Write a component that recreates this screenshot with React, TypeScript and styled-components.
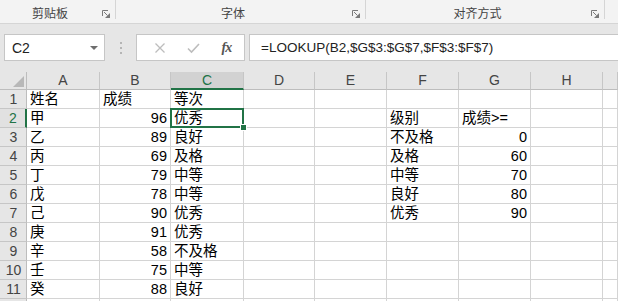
import React from "react";
import styled, { createGlobalStyle } from "styled-components";

const Global = createGlobalStyle`
  html, body { margin: 0; padding: 0; background: #ffffff; overflow: hidden; }
  body { font-family: "Liberation Sans", "Noto Sans CJK SC", sans-serif; }
`;

const Page = styled.div`
  width: 618px;
  height: 301px;
  overflow: hidden;
  display: flex;
  flex-direction: column;
  background: #ffffff;
`;

const Ribbon = styled.div`
  height: 23px;
  background: #f3f3f3;
  border-bottom: 1px solid #d5d5d5;
  display: flex;
  flex-shrink: 0;
`;

const Group = styled.div<{ $w: number }>`
  width: ${(p) => p.$w}px;
  height: 19px;
  display: flex;
  align-items: flex-end;
  border-right: 1px solid #d5d5d5;
  box-sizing: border-box;
  flex-shrink: 0;
`;

const GroupLabel = styled.div`
  flex: 1;
  text-align: center;
  font-family: "Noto Sans CJK SC", sans-serif;
  font-size: 12px;
  line-height: 19px;
  color: #444444;
  align-self: stretch;
  padding-top: 3px;
`;

const Launcher = styled.svg`
  width: 8px;
  height: 8px;
  margin: 0 5px 0px 2px;
  flex-shrink: 0;
  position: relative;
  top: -1px;
`;

const FormulaArea = styled.div`
  height: 48px;
  background: #e6e6e6;
  display: flex;
  align-items: flex-start;
  padding: 10px 0 0 4px;
  box-sizing: border-box;
  flex-shrink: 0;
`;

const NameBox = styled.div`
  width: 101px;
  height: 27px;
  box-sizing: border-box;
  background: #ffffff;
  border: 1px solid #c6c6c6;
  display: flex;
  align-items: center;
  padding: 0 6px 0 7px;
  font-size: 14px;
  color: #222222;
`;

const NameText = styled.span`
  flex: 1;
`;

const Caret = styled.span`
  width: 0;
  height: 0;
  border-left: 4px solid transparent;
  border-right: 4px solid transparent;
  border-top: 4px solid #6e6e6e;
`;

const Grip = styled.div`
  width: 31px;
  height: 27px;
  display: flex;
  flex-direction: column;
  align-items: center;
  justify-content: center;
  gap: 3px;
`;

const GripDot = styled.span`
  width: 2px;
  height: 2px;
  background: #b5b5b5;
`;

const ButtonBox = styled.div`
  width: 109px;
  height: 27px;
  box-sizing: border-box;
  background: #ffffff;
  border: 1px solid #c6c6c6;
  display: flex;
  align-items: center;
  justify-content: space-around;
  padding: 0 2px 0 6px;
`;

const Fx = styled.span`
  font-family: "Liberation Serif", "DejaVu Serif", serif;
  font-style: italic;
  font-size: 14px;
  color: #555555;
  letter-spacing: -1px;
  font-weight: bold;
`;

const FormulaInput = styled.div`
  flex: 1;
  height: 27px;
  margin-left: 4px;
  box-sizing: border-box;
  background: #ffffff;
  border: 1px solid #c6c6c6;
  border-right: none;
  display: flex;
  align-items: center;
  padding-left: 11px;
  font-size: 13.5px;
  color: #222222;
  white-space: nowrap;
`;

const Sheet = styled.div`
  display: grid;
  grid-template-columns: 27px 73px 71px 73px 71px 72px 72px 72px 72px 1fr;
  grid-template-rows: 18px repeat(12, 19px);
  overflow: hidden;
  flex: 1;
`;

const Corner = styled.div`
  background: #e6e6e6;
  border-right: 1px solid #bdbdbd;
  border-bottom: 1px solid #bdbdbd;
  box-sizing: border-box;
  display: flex;
  align-items: flex-end;
  justify-content: flex-end;
  padding: 0 2px 2px 0;
`;

const CornerTri = styled.span`
  width: 0;
  height: 0;
  border-left: 11px solid transparent;
  border-bottom: 11px solid #b8b8b8;
`;

const ColHeader = styled.div<{ $active?: boolean }>`
  background: ${(p) => (p.$active ? "#d2d2d2" : "#e6e6e6")};
  border-right: 1px solid #c6c6c6;
  border-bottom: ${(p) => (p.$active ? "2px solid #217346" : "1px solid #bdbdbd")};
  box-sizing: border-box;
  text-align: center;
  font-size: 14px;
  line-height: 17px;
  color: ${(p) => (p.$active ? "#217346" : "#444444")};
`;

const RowHeader = styled.div<{ $active?: boolean }>`
  background: ${(p) => (p.$active ? "#e1e1e1" : "#e6e6e6")};
  border-right: ${(p) => (p.$active ? "2px solid #217346" : "1px solid #bdbdbd")};
  border-bottom: 1px solid #c6c6c6;
  box-sizing: border-box;
  text-align: center;
  font-size: 14px;
  line-height: 18px;
  color: ${(p) => (p.$active ? "#217346" : "#444444")};
  padding-left: 1px;
`;

const Cell = styled.div<{ $num?: boolean }>`
  position: relative;
  border-right: 1px solid #d4d4d4;
  border-bottom: 1px solid #d4d4d4;
  box-sizing: border-box;
  font-family: "Liberation Sans", "Noto Sans CJK SC", sans-serif;
  font-size: 14.5px;
  line-height: 19px;
  color: #000000;
  text-align: ${(p) => (p.$num ? "right" : "left")};
  padding: 0 3px 0 3px;
  white-space: nowrap;
  overflow: visible;
`;

const Selection = styled.div`
  position: absolute;
  left: -1px;
  top: -1px;
  right: -1px;
  bottom: -1px;
  border: 2px solid #217346;
  pointer-events: none;
  z-index: 2;
`;

const FillHandle = styled.span`
  position: absolute;
  right: -5px;
  bottom: -5px;
  width: 5px;
  height: 5px;
  background: #217346;
  border: 1px solid #ffffff;
`;

const columns = ["A", "B", "C", "D", "E", "F", "G", "H", ""];

type V = string | number;
const data: V[][] = [
  ["姓名", "成绩", "等次", "", "", "", "", "", ""],
  ["甲", 96, "优秀", "", "", "级别", "成绩>=", "", ""],
  ["乙", 89, "良好", "", "", "不及格", 0, "", ""],
  ["丙", 69, "及格", "", "", "及格", 60, "", ""],
  ["丁", 79, "中等", "", "", "中等", 70, "", ""],
  ["戊", 78, "中等", "", "", "良好", 80, "", ""],
  ["己", 90, "优秀", "", "", "优秀", 90, "", ""],
  ["庚", 91, "优秀", "", "", "", "", "", ""],
  ["辛", 58, "不及格", "", "", "", "", "", ""],
  ["壬", 75, "中等", "", "", "", "", "", ""],
  ["癸", 88, "良好", "", "", "", "", "", ""],
  ["", "", "", "", "", "", "", "", ""],
];

const LauncherIcon = () => (
  <Launcher viewBox="0 0 8 8">
    <path d="M0.5 6 V0.5 H6" stroke="#7a7a7a" strokeWidth="1" fill="none" />
    <path d="M2 2 L5.5 5.5" stroke="#7a7a7a" strokeWidth="1" />
    <path d="M3 8 H8 V3 Z" fill="#7a7a7a" />
  </Launcher>
);

const CancelIcon = () => (
  <svg width="12" height="12" viewBox="0 0 12 12">
    <path d="M1.5 1.5 L10.5 10.5 M10.5 1.5 L1.5 10.5" stroke="#bdbdbd" strokeWidth="1.3" />
  </svg>
);

const CheckIcon = () => (
  <svg width="13" height="12" viewBox="0 0 13 12">
    <path d="M1 6.5 L4.5 10 L12 2" stroke="#bdbdbd" strokeWidth="1.6" fill="none" />
  </svg>
);

export default function App() {
  return (
    <Page>
      <Global />
      <Ribbon>
        <Group $w={116}>
          <GroupLabel>剪贴板</GroupLabel>
          <LauncherIcon />
        </Group>
        <Group $w={250}>
          <GroupLabel>字体</GroupLabel>
          <LauncherIcon />
        </Group>
        <Group $w={239}>
          <GroupLabel>对齐方式</GroupLabel>
          <LauncherIcon />
        </Group>
      </Ribbon>
      <FormulaArea>
        <NameBox>
          <NameText>C2</NameText>
          <Caret />
        </NameBox>
        <Grip>
          <GripDot />
          <GripDot />
          <GripDot />
        </Grip>
        <ButtonBox>
          <CancelIcon />
          <CheckIcon />
          <Fx>fx</Fx>
        </ButtonBox>
        <FormulaInput>=LOOKUP(B2,$G$3:$G$7,$F$3:$F$7)</FormulaInput>
      </FormulaArea>
      <Sheet>
        <Corner>
          <CornerTri />
        </Corner>
        {columns.map((c, i) => (
          <ColHeader key={i} $active={c === "C"}>
            {c}
          </ColHeader>
        ))}
        {data.map((row, r) => (
          <React.Fragment key={r}>
            <RowHeader $active={r === 1}>{r < 11 ? r + 1 : ""}</RowHeader>
            {row.map((v, c) => (
              <Cell key={c} $num={typeof v === "number"}>
                {v}
                {r === 1 && c === 2 && (
                  <Selection>
                    <FillHandle />
                  </Selection>
                )}
              </Cell>
            ))}
          </React.Fragment>
        ))}
      </Sheet>
    </Page>
  );
}
